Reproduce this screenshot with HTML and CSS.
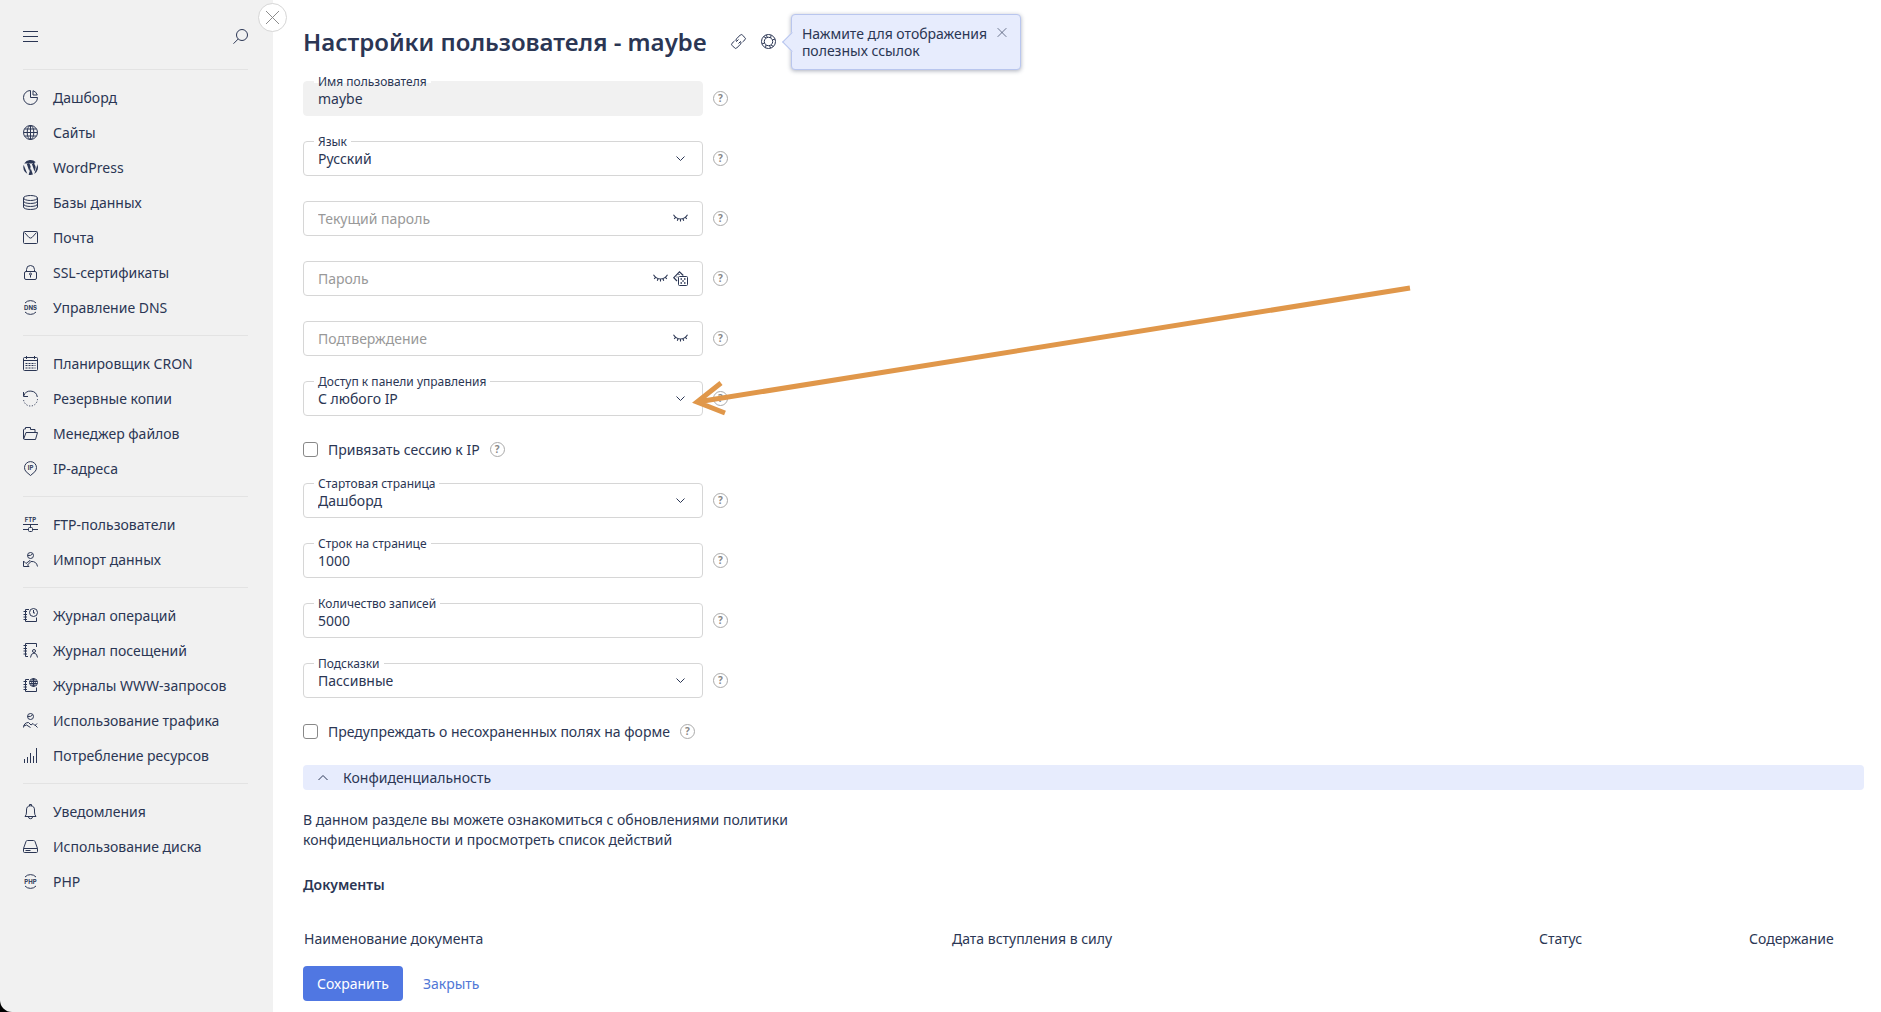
FILE: index.html
```html
<!DOCTYPE html>
<html lang="ru">
  <head>
    <meta charset="UTF-8" />
    <meta name="viewport" content="width=device-width, initial-scale=1.0" />
    <title>Настройки пользователя</title>
    <link rel="stylesheet" href="styles.css">
  </head>
  <body>
    <!-- Shared icons -->
    <svg class="sprite" aria-hidden="true">
      <symbol id="i-down" viewBox="0 0 15 15"><path d="M3.500 5.500l4 4 4-4" /></symbol>
      <symbol id="i-close" viewBox="0 0 15 15"><path d="M1 1l13 13M14 1L1 14" /></symbol>
      <symbol id="i-eye" viewBox="0 0 15 15">
        <path stroke-width="1.100" d="M.5 3.800C4 9.300 11 9.300 14.500 3.800M2.600 6.300L1.200 7.800M5 7.700l-.7 2M7.500 8v2.400M10 7.700l.7 2M12.400 6.300l1.400 1.500" />
      </symbol>
      <symbol id="i-book" viewBox="0 0 15 15">
        <path d="M6 1.500H2.500v12h11V9.500M.5 3.500h3.500M.5 6.500h3.500M.5 9h3.500M.5 11.500h3.500" />
      </symbol>
    </svg>

    <aside class="sidebar">
      <button class="sidebar__close" aria-label="Закрыть"><svg class="icon"><use href="#i-close" /></svg></button>
      <div class="sidebar__top">
        <button class="icon-button" aria-label="Меню">
          <svg class="icon" viewBox="0 0 15 15"><path d="M0 2.500h15M0 7.500h15M0 12.500h15" /></svg>
        </button>
        <button class="icon-button" aria-label="Поиск">
          <svg class="icon" viewBox="0 0 15 15"><circle cx="9" cy="6" r="5.500" /><path d="M5.200 10L.5 14.700" /></svg>
        </button>
      </div>
      <nav>
        <ul class="menu">
          <li><a href="#"><svg class="icon" viewBox="0 0 15 15"><path d="M7.500.5a7 7 0 1 0 7 7h-7zM10 .7A6.500 6.500 0 0 1 14.300 5H10z" /></svg>Дашборд</a></li>
          <li><a href="#"><svg class="icon" viewBox="0 0 15 15"><circle cx="7.500" cy="7.500" r="7" /><ellipse cx="7.500" cy="7.500" rx="3.300" ry="7" /><path d="M7.500.5v14M.5 7.500h14M1.600 4h11.800M1.600 11h11.800" /></svg>Сайты</a></li>
          <li><a href="#"><svg class="icon icon--solid" viewBox="0 0 15 15"><path d="M1.200 3.400A7.500 7.500 0 0 1 12.800 2.200c-1.400.1-1.800 1.300-1.100 2.500.9 1.500 1.200 2.300.7 4l-.9 2.800L8.900 4.100l1-.1v-.6H5.700V4l1 .1 1 2.700-1.400 4.400-2.500-7.100.9-.1v-.6zM.6 4.800l3.700 9A7.500 7.500 0 0 1 .6 4.800zM7.700 8.200l2.200 6.300a7.500 7.500 0 0 1-4.300.3zM14.100 4A7.500 7.500 0 0 1 11.300 14l2.300-6.700c.4-1.200.6-2.300.5-3.300z" /></svg>WordPress</a></li>
          <li><a href="#"><svg class="icon" viewBox="0 0 15 15"><ellipse cx="7.500" cy="3" rx="7" ry="2.500" /><path d="M.5 3v9c0 3.300 14 3.300 14 0V3M.5 6c0 3.300 14 3.300 14 0M.5 9c0 3.300 14 3.300 14 0" /></svg>Базы данных</a></li>
          <li><a href="#"><svg class="icon" viewBox="0 0 15 15"><rect x=".5" y="1.500" width="14" height="12" rx="1" /><path d="M1.500 2.500l4.500 5q1.500 1.200 3 0l4.500-5" /></svg>Почта</a></li>
          <li><a href="#"><svg class="icon" viewBox="0 0 15 15"><rect x="1.500" y="6.500" width="12" height="8" rx="1.500" /><path d="M3.500 6.500V4.500a4 4 0 0 1 8 0v2M7.500 10v2.500" /><circle cx="7.500" cy="9" r="1" /></svg>SSL-сертификаты</a></li>
          <li><a href="#"><svg class="icon" viewBox="0 0 15 15"><path d="M2 3a7.500 7.500 0 0 1 11 0M2 12a7.500 7.500 0 0 0 11 0" /><text x="7.500" y="10">DNS</text></svg>Управление DNS</a></li>
        </ul>
        <ul class="menu">
          <li><a href="#"><svg class="icon" viewBox="0 0 15 15"><rect x=".5" y="1.500" width="14" height="13" rx="1" /><path d="M.5 4.500h14M3.500 0v3M11.500 0v3" /><path d="M2.500 7.500h10M2.500 9.500h10M2.500 12h10" stroke-dasharray="2 1" /></svg>Планировщик CRON</a></li>
          <li><a href="#"><svg class="icon" viewBox="0 0 15 15"><path d="M.5 1v4.500H5M.7 5A7 7 0 0 1 14.300 6" /><path d="M14.500 8A7 7 0 0 1 .5 8" stroke-dasharray="1.200 1.600" /></svg>Резервные копии</a></li>
          <li><a href="#"><svg class="icon" viewBox="0 0 15 15"><path d="M.5 12V4q0-1 1-1H2.500V1.500h5V3.500h4.500V6M.7 13L3 6.500h11.500l-2 7H1.500q-1 0-1-1.500" /></svg>Менеджер файлов</a></li>
          <li><a href="#"><svg class="icon" viewBox="0 0 15 15"><path d="M7.500 14.500L3.200 10.800A6 6 0 1 1 11.800 10.800z" /><text x="7.500" y="8.500">IP</text></svg>IP-адреса</a></li>
        </ul>
        <ul class="menu">
          <li><a href="#"><svg class="icon" viewBox="0 0 15 15"><text x="7.500" y="5">FTP</text><path d="M0 7.500h15M7.500 7.500V10M0 12.500h5.500M9.500 12.500H15" /><rect x="5.500" y="10.500" width="4" height="4" rx="1" /></svg>FTP-пользователи</a></li>
          <li><a href="#"><svg class="icon" viewBox="0 0 15 15"><circle cx="7.500" cy="3.500" r="3" /><path d="M4.500 3.500Q8 4 9.500 2M8 9.500q5.500-.5 6.500 5M.5 9v5.500H6L4.500 13l3.500-3.500-1-1-4 3z" /></svg>Импорт данных</a></li>
        </ul>
        <ul class="menu">
          <li><a href="#"><svg class="icon" viewBox="0 0 15 15"><use href="#i-book" /><circle cx="10.500" cy="4.500" r="4" /><path d="M10.500 2v3H12" /></svg>Журнал операций</a></li>
          <li><a href="#"><svg class="icon" viewBox="0 0 15 15"><path d="M13.500 4V.5h-11v13H5M.5 2.500H4M.5 5.500H4M.5 8H4M.5 11H4" /><circle cx="11" cy="8" r="1.500" /><path d="M7.500 14.500q.2-4 3.500-4.500 3.300.5 3.500 4.500" /></svg>Журнал посещений</a></li>
          <li><a href="#"><svg class="icon" viewBox="0 0 15 15"><use href="#i-book" /><circle cx="10.500" cy="4.500" r="4" /><ellipse cx="10.500" cy="4.500" rx="1.800" ry="4" /><path d="M10.500.5v8M6.500 3.500h8M6.500 5.500h8" /></svg>Журналы WWW-запросов</a></li>
          <li><a href="#"><svg class="icon" viewBox="0 0 15 15"><circle cx="7.500" cy="3.500" r="3" /><path d="M4.500 3.500Q8 4 9.500 2M.5 14.500q.5-5 5-5l2.500 2.500 2-1.500 2 2 2-2M.5 13l3-1 4 2.500M12 12l2.500 2.500" /></svg>Использование трафика</a></li>
          <li><a href="#"><svg class="icon" viewBox="0 0 15 15"><path d="M1.500 11v4M4.500 9v6M7.500 5v10M10.500 8v7M13.500 0v15" /></svg>Потребление ресурсов</a></li>
        </ul>
        <ul class="menu">
          <li><a href="#"><svg class="icon" viewBox="0 0 15 15"><path d="M2 12.500Q3.500 11 3.500 8V6a4 4.200 0 0 1 8 0v2q0 3 1.500 4.500zM5.500 13a2 1.700 0 0 0 4 0M6.500 2V.5h2V2" /></svg>Уведомления</a></li>
          <li><a href="#"><svg class="icon" viewBox="0 0 15 15"><path d="M.5 9.500L3 2.500q.3-1 1.500-1h6q1.200 0 1.500 1l2.500 7v3q0 1-1 1h-12q-1 0-1-1zM.5 9.500h14M2.500 11.500h5" /></svg>Использование диска</a></li>
          <li><a href="#"><svg class="icon" viewBox="0 0 15 15"><path d="M2 3a7.500 7.500 0 0 1 11 0M2 12a7.500 7.500 0 0 0 11 0" /><text x="7.500" y="10">PHP</text></svg>PHP</a></li>
        </ul>
      </nav>
    </aside>

    <main class="main">
      <header class="page-header">
        <h1>Настройки пользователя - maybe</h1>
        <div class="page-header__tools">
          <button class="icon-button" aria-label="Ссылка">
            <svg class="icon" viewBox="0 0 15 15"><path d="M5.500 7.500q-1.200-1.500 0-2.700L9.300 1q1-1 2 0L14 3.700q1 1 0 2L11.500 8M5.500 7.500L7.500 5.500M9.500 7.500q1.200 1.500 0 2.700L5.700 14q-1 1-2 0L1 11.300q-1-1 0-2L3.500 7M9.500 7.500L7.500 9.500" /></svg>
          </button>
          <button class="icon-button" aria-label="Полезные ссылки">
            <svg class="icon" viewBox="0 0 15 15"><circle cx="7.500" cy="7.500" r="7" /><circle cx="7.500" cy="7.500" r="4.200" /><path d="M2.500 2.500l2.700 1.500M5 1l1.500 2.500M10 1.200L9.700 4M14 5l-2.700 1M12.500 12.500L10 11M9.500 14l-1-2.500M4.500 13.700L5 11M1 10l2.500-1" /></svg>
          </button>
          <div class="tooltip">
            <span>Нажмите для отображения полезных ссылок</span>
            <button class="tooltip__close" aria-label="Закрыть подсказку"><svg class="icon"><use href="#i-close" /></svg></button>
          </div>
        </div>
      </header>

      <form class="form">
        <div class="row">
          <div class="field">
            <label for="name">Имя пользователя</label>
            <input class="control control--readonly" id="name" type="text" value="maybe" readonly>
          </div>
          <button type="button" class="help">?</button>
        </div>
        <div class="row">
          <div class="field">
            <label for="lang">Язык</label>
            <select class="control" id="lang"><option>Русский</option></select>
            <div class="field__icons"><svg class="icon"><use href="#i-down" /></svg></div>
          </div>
          <button type="button" class="help">?</button>
        </div>
        <div class="row">
          <div class="field">
            <input class="control" type="password" placeholder="Текущий пароль" aria-label="Текущий пароль">
            <div class="field__icons"><svg class="icon"><use href="#i-eye" /></svg></div>
          </div>
          <button type="button" class="help">?</button>
        </div>
        <div class="row">
          <div class="field">
            <input class="control" type="password" placeholder="Пароль" aria-label="Пароль">
            <div class="field__icons">
              <svg class="icon"><use href="#i-eye" /></svg>
              <svg class="icon" viewBox="0 0 15 15"><rect x="5.500" y="5.500" width="9" height="9" rx="1" /><path stroke-width="1.200" d="M4 10L.8 6.700 6.500.8 10.300 4.500M6 3v1M3.500 6h1" /><path d="M7.500 8h1.500M11 8h1.500M9.300 10h1.500M7.500 12h1.500M11 12h1.500" stroke-width="1.500" /></svg>
            </div>
          </div>
          <button type="button" class="help">?</button>
        </div>
        <div class="row">
          <div class="field">
            <input class="control" type="password" placeholder="Подтверждение" aria-label="Подтверждение">
            <div class="field__icons"><svg class="icon"><use href="#i-eye" /></svg></div>
          </div>
          <button type="button" class="help">?</button>
        </div>
        <div class="row">
          <div class="field">
            <label for="access">Доступ к панели управления</label>
            <select class="control" id="access"><option>С любого IP</option></select>
            <div class="field__icons"><svg class="icon"><use href="#i-down" /></svg></div>
          </div>
          <button type="button" class="help">?</button>
          <svg class="arrow" viewBox="0 0 730 140" aria-hidden="true">
            <path d="M7 120L720 6M31 101L7 120 35 131" />
          </svg>
        </div>
        <div class="check">
          <input type="checkbox" id="bind"><label for="bind">Привязать сессию к IP</label>
          <button type="button" class="help">?</button>
        </div>
        <div class="row">
          <div class="field">
            <label for="start">Стартовая страница</label>
            <select class="control" id="start"><option>Дашборд</option></select>
            <div class="field__icons"><svg class="icon"><use href="#i-down" /></svg></div>
          </div>
          <button type="button" class="help">?</button>
        </div>
        <div class="row">
          <div class="field">
            <label for="rows">Строк на странице</label>
            <input class="control" id="rows" type="text" value="1000">
          </div>
          <button type="button" class="help">?</button>
        </div>
        <div class="row">
          <div class="field">
            <label for="count">Количество записей</label>
            <input class="control" id="count" type="text" value="5000">
          </div>
          <button type="button" class="help">?</button>
        </div>
        <div class="row">
          <div class="field">
            <label for="hints">Подсказки</label>
            <select class="control" id="hints"><option>Пассивные</option></select>
            <div class="field__icons"><svg class="icon"><use href="#i-down" /></svg></div>
          </div>
          <button type="button" class="help">?</button>
        </div>
        <div class="check">
          <input type="checkbox" id="warn"><label for="warn">Предупреждать о несохраненных полях на форме</label>
          <button type="button" class="help">?</button>
        </div>

        <section class="privacy">
          <button type="button" class="privacy__toggle">
            <svg class="icon" viewBox="0 0 10 15"><path d="M.5 10L5 5.500l4.500 4.500" /></svg>
            Конфиденциальность
          </button>
          <p>В данном разделе вы можете ознакомиться с обновлениями политики конфиденциальности и просмотреть список действий</p>
          <h2>Документы</h2>
          <table class="docs">
            <thead>
              <tr>
                <th class="docs__name">Наименование документа</th>
                <th class="docs__date">Дата вступления в силу</th>
                <th class="docs__status">Статус</th>
                <th class="docs__content">Содержание</th>
              </tr>
            </thead>
          </table>
        </section>

        <div class="actions">
          <button type="submit" class="button">Сохранить</button>
          <a href="#" class="actions__cancel">Закрыть</a>
        </div>
      </form>
    </main>
  </body>
</html>
```

FILE: styles.css
```css
* {
  box-sizing: border-box;
}

body {
  display: flex;
  min-height: 100vh;
  margin: 0;
  background-color: #000;
  color: #2b3654;
  font-family: "Noto Sans", sans-serif;
  font-size: 14px;
  line-height: 20px;
}

button,
input,
select {
  font: inherit;
  color: inherit;
}

button {
  padding: 0;
  border: none;
  background: none;
  cursor: pointer;
}

.sprite {
  position: absolute;
  width: 0;
  height: 0;
}

/* Icons */
.icon {
  display: block;
  flex: none;
  width: 15px;
  height: 15px;
  overflow: visible;
  fill: none;
  stroke: #2b3654;
}

.icon--solid {
  fill: #2b3654;
  stroke: none;
}

.icon text {
  fill: #2b3654;
  stroke: none;
  font-family: "Inter", sans-serif;
  font-size: 6px;
  font-weight: 700;
  text-anchor: middle;
}

/* Sidebar */
.sidebar {
  position: relative;
  flex: none;
  width: 273px;
  padding: 0 25px 0 23px;
  background-color: #f1f1f1;
  border-bottom-left-radius: 12px;
}

.sidebar__top {
  display: flex;
  justify-content: space-between;
  align-items: center;
  height: 69px;
  padding-top: 4px;
}

.sidebar__close {
  position: absolute;
  top: 3px;
  right: -14px;
  display: flex;
  justify-content: center;
  align-items: center;
  width: 29px;
  height: 29px;
  border: 1px solid #d6d6d6;
  border-radius: 50%;
  background-color: #fff;
}

.sidebar__close .icon {
  stroke: #8c8c8c;
}

.menu {
  list-style: none;
  margin: 0;
  padding: 10px 0;
  border-top: 1px solid #e3e3e3;
}

.menu a {
  display: flex;
  align-items: center;
  gap: 15px;
  height: 35px;
  color: inherit;
  text-decoration: none;
  white-space: nowrap;
}

/* Main */
.main {
  flex: 1;
  min-width: 0;
  padding: 0 17px 11px 30px;
  background-color: #fff;
}

.page-header {
  display: flex;
  align-items: center;
  gap: 24px;
  height: 81px;
  padding-top: 2px;
}

h1 {
  margin: 0;
  font-size: 24px;
  font-weight: 600;
  line-height: 32px;
  white-space: nowrap;
}

.page-header__tools {
  display: flex;
  align-items: center;
  gap: 15px;
}

.tooltip {
  position: relative;
  display: flex;
  align-items: flex-start;
  gap: 4px;
  width: 230px;
  padding: 10px 13px 10px 10px;
  border: 1px solid #b9c6ee;
  border-radius: 4px;
  background-color: #e7ecfd;
  box-shadow: 0 1px 4px rgba(43, 54, 84, 0.4);
  line-height: 17px;
}

.tooltip::before {
  content: "";
  position: absolute;
  top: 50%;
  left: -7px;
  width: 13px;
  height: 13px;
  margin-top: -7px;
  border: solid #b9c6ee;
  border-width: 0 0 1px 1px;
  background-color: #e7ecfd;
  transform: rotate(45deg);
}

.tooltip span {
  flex: 1;
}

.tooltip__close .icon {
  width: 10px;
  height: 15px;
}

/* Form */
.form {
  display: flex;
  flex-direction: column;
  gap: 25px;
}

.row {
  position: relative;
  display: flex;
  align-items: center;
  gap: 10px;
}

.field {
  position: relative;
  width: 400px;
}

.field label {
  position: absolute;
  top: 0;
  left: 11px;
  padding: 0 4px;
  background-color: #fff;
  font-size: 12px;
  line-height: 2px;
}

.control {
  display: block;
  width: 100%;
  height: 35px;
  padding: 0 14px;
  border: 1px solid #d6d6d6;
  border-radius: 4px;
  background-color: #fff;
  outline: none;
  appearance: none;
}

.control--readonly {
  border-color: #f1f1f1;
  background-color: #f1f1f1;
}

.control::placeholder {
  color: #999;
  opacity: 1;
}

.field__icons {
  position: absolute;
  top: 10px;
  right: 15px;
  display: flex;
  gap: 5px;
  pointer-events: none;
}

.help {
  flex: none;
  width: 15px;
  height: 15px;
  border: 1px solid #aaa;
  border-radius: 50%;
  color: #888;
  font-size: 10px;
  font-weight: 700;
  line-height: 13px;
}

.check {
  display: flex;
  align-items: center;
  gap: 10px;
  height: 17px;
}

.check input {
  width: 15px;
  height: 15px;
  margin: 0;
  border: 1px solid #888;
  border-radius: 3px;
  background-color: #fff;
  appearance: none;
}

/* Pointer to the access field */
.arrow {
  position: absolute;
  top: -99px;
  left: 387px;
  z-index: 1;
  width: 730px;
  height: 140px;
  fill: none;
  stroke: #e0974a;
  stroke-width: 5;
  pointer-events: none;
}

/* Privacy */
.privacy__toggle {
  display: flex;
  align-items: center;
  gap: 15px;
  width: 100%;
  height: 25px;
  padding: 0 15px;
  border-radius: 4px;
  background-color: #e7ecfd;
}

.privacy__toggle .icon {
  width: 10px;
}

.privacy p {
  max-width: 500px;
  margin: 20px 0 25px;
}

.privacy h2 {
  margin: 0 0 34px;
  font-size: 14px;
  font-weight: 600;
}

.docs {
  width: 100%;
  border-collapse: collapse;
  table-layout: fixed;
}

.docs th {
  padding: 0 1px;
  font-weight: 400;
  text-align: left;
}

.docs__date {
  width: 587px;
}

.docs__status {
  width: 210px;
}

.docs .docs__content {
  width: 116px;
}

.actions {
  display: flex;
  align-items: center;
  gap: 20px;
  margin-top: -8px;
}

.button {
  height: 35px;
  padding: 0 14px;
  border-radius: 4px;
  background-color: #5077e2;
  color: #fff;
}

.actions__cancel {
  color: #5077d6;
  text-decoration: none;
}
```
